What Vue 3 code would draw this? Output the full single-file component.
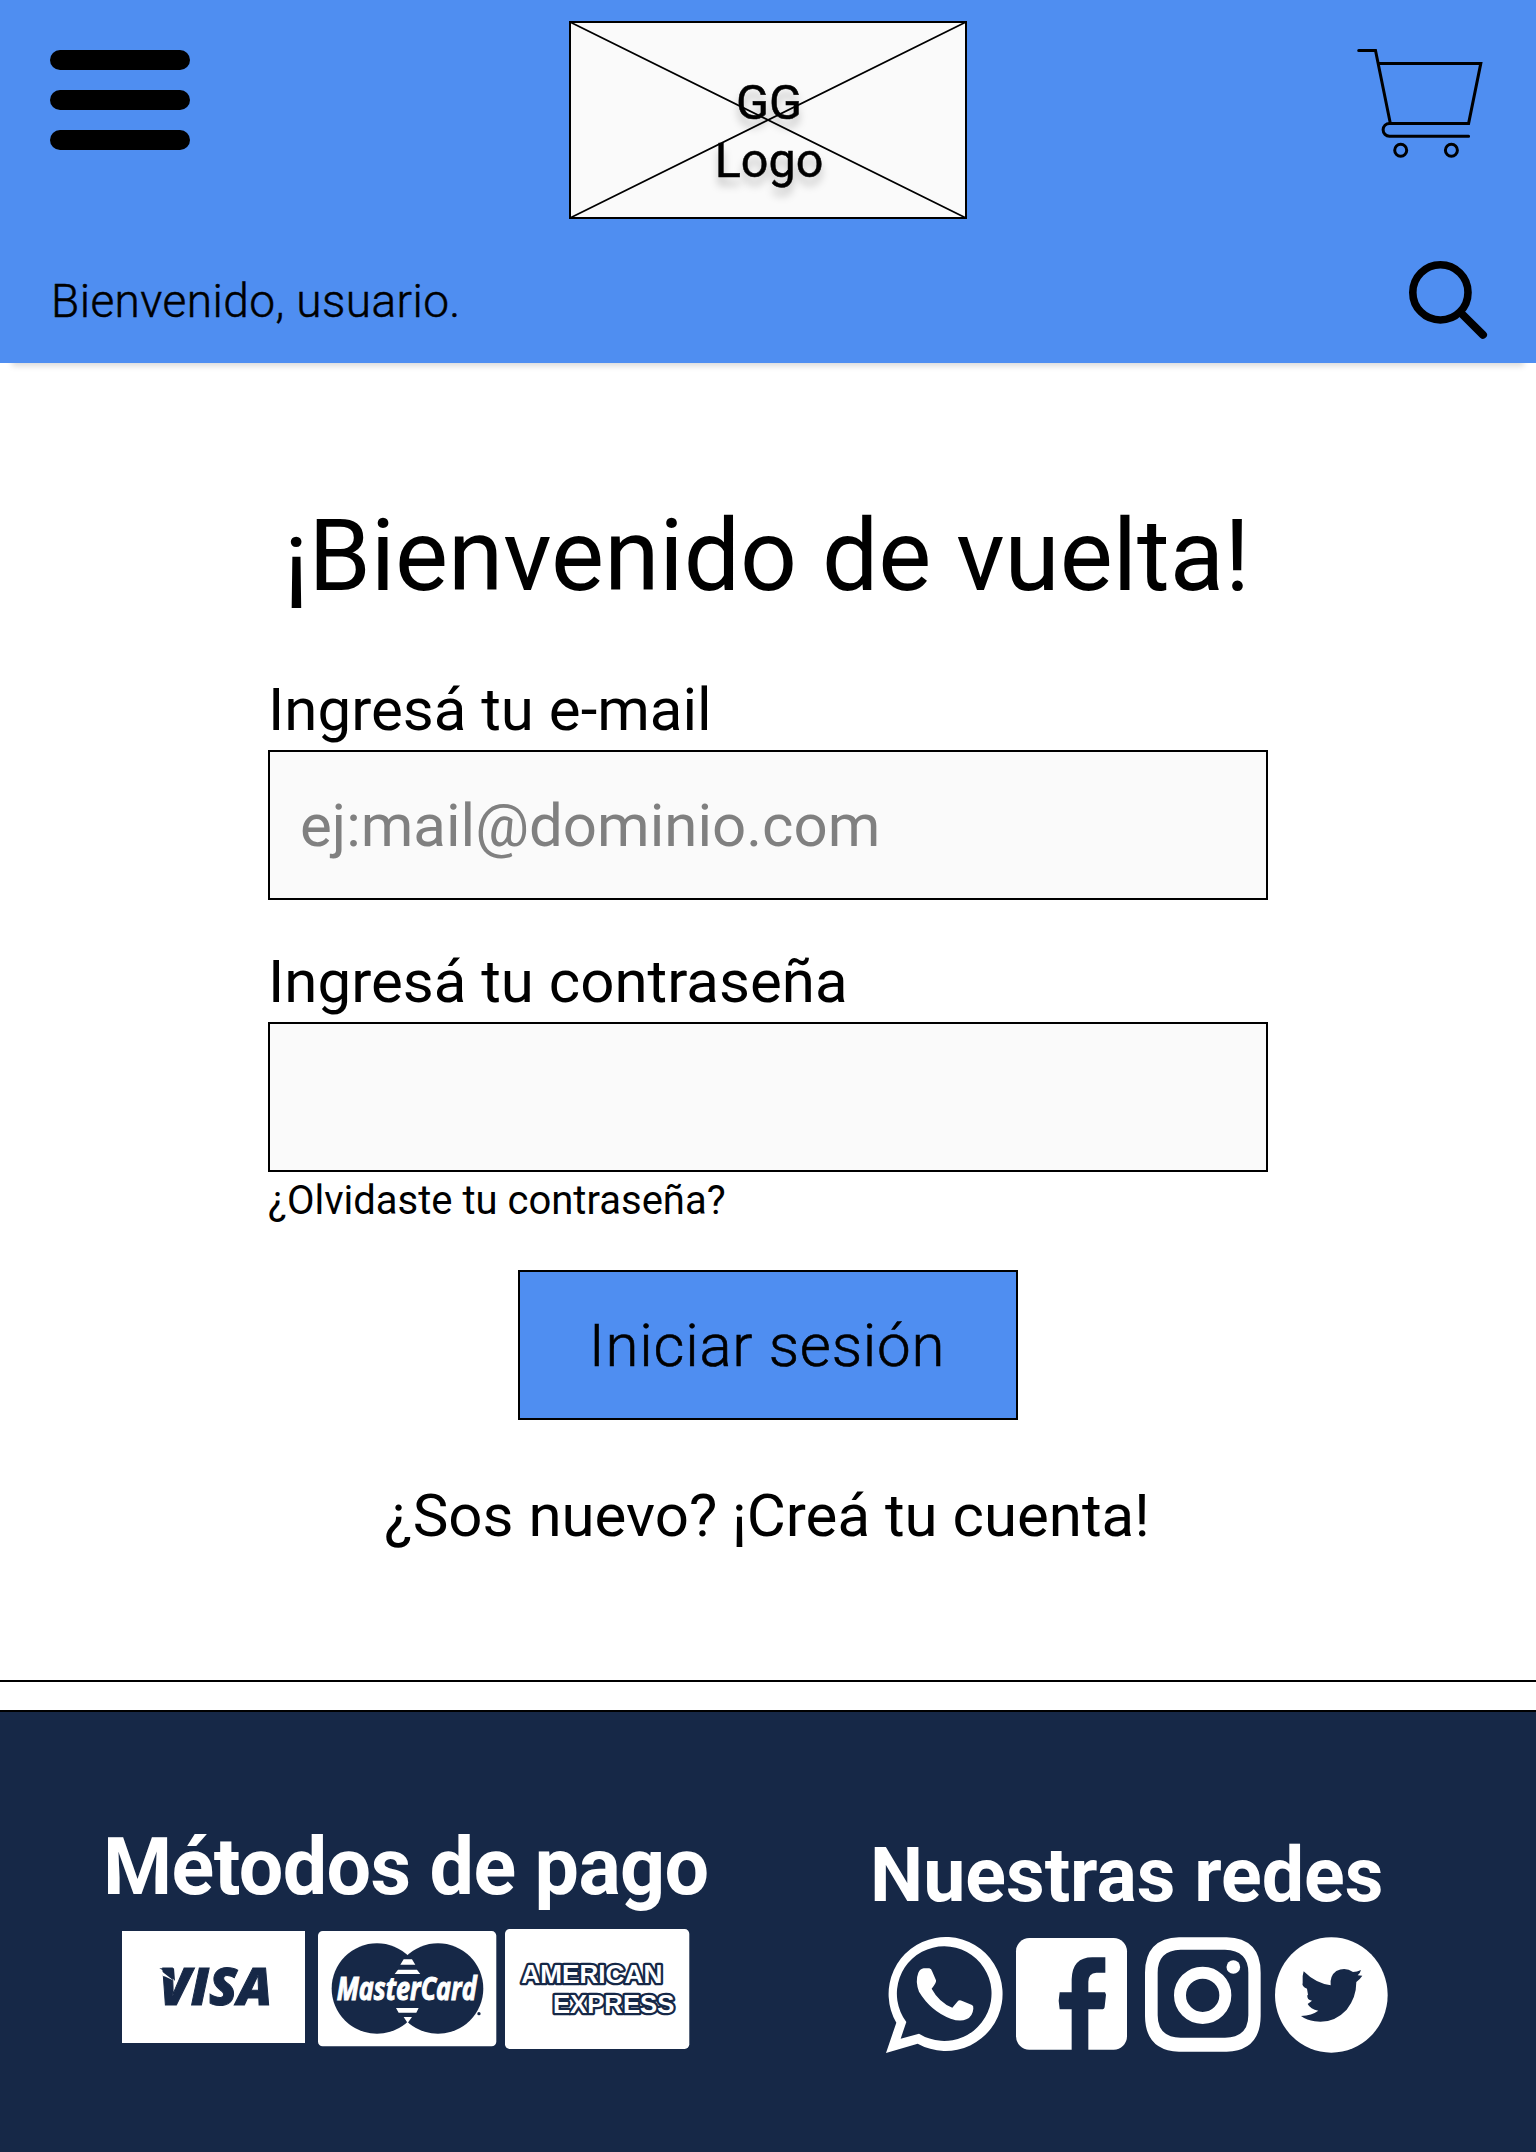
<script setup>
import { ref } from 'vue'

const email = ref('')
const password = ref('')
</script>

<template>
  <div class="page">
    <header class="header">
      <div class="top-row">
        <button class="icon-button menu" type="button" aria-label="Menú">
          <svg width="140" height="100" viewBox="0 0 140 100">
            <rect width="140" height="20" rx="10" />
            <rect y="40" width="140" height="20" rx="10" />
            <rect y="80" width="140" height="20" rx="10" />
          </svg>
        </button>
        <div class="logo">
          <svg class="logo-cross" viewBox="0 0 398 198" preserveAspectRatio="none">
            <path d="M1 1 397 197M397 1 1 197" fill="none" stroke="#000" stroke-width="1.8" />
          </svg>
          <span class="logo-text">GG<br />Logo</span>
        </div>
        <button class="icon-button cart" type="button" aria-label="Carrito">
          <svg width="126" height="110" viewBox="1357 49 126 110" fill="none" stroke="#000" stroke-width="3" stroke-linecap="round" stroke-linejoin="miter">
            <path d="M1358.7 50.5H1375.5L1390.3 123.3" />
            <path d="M1379 63.4H1480.8L1468.6 123.4H1389.5A6.4 6.4 0 0 0 1389.5 136.2H1468.6" />
            <circle cx="1400.7" cy="150.3" r="6" />
            <circle cx="1451.4" cy="150.3" r="6" />
          </svg>
        </button>
      </div>
      <div class="bottom-row">
        <span class="greeting">Bienvenido, usuario.</span>
        <button class="icon-button search" type="button" aria-label="Buscar">
          <svg width="80" height="80" viewBox="0 0 80 80" fill="none" stroke="#000">
            <circle cx="32.4" cy="32.4" r="27.6" stroke-width="7.6" />
            <path d="M53 53 75 74.8" stroke-width="8" stroke-linecap="round" />
          </svg>
        </button>
      </div>
    </header>

    <main class="login">
      <h1>¡Bienvenido de vuelta!</h1>
      <form class="form" @submit.prevent>
        <label for="email">Ingresá tu e-mail</label>
        <input id="email" v-model="email" type="text" placeholder="ej:mail@dominio.com" />
        <label for="password">Ingresá tu contraseña</label>
        <input id="password" v-model="password" type="password" />
        <a class="forgot">¿Olvidaste tu contraseña?</a>
        <button class="submit" type="submit">Iniciar sesión</button>
      </form>
      <a class="register">¿Sos nuevo? ¡Creá tu cuenta!</a>
    </main>

    <div class="divider"></div>

    <footer class="footer">
      <section class="payments">
        <h2>Métodos de pago</h2>
        <div class="cards">
          <svg class="visa" width="183" height="112" viewBox="0 0 183 112">
            <rect width="183" height="112" fill="#fff" />
            <text x="37" y="74" textLength="113" lengthAdjust="spacingAndGlyphs" class="visa-text">VISA</text>
            <path d="M37.3 37.3H52L53 50Q47 42 37.3 37.3Z" fill="#162847" />
            <path d="M38 39 51.5 49.5 43 45.5 41 45Z" fill="#fff" />
          </svg>
          <svg class="mastercard" width="178.3" height="116" viewBox="23 33 535 348">
            <rect x="23" y="33" width="535" height="346" rx="14" fill="#fff" />
            <g fill="#162847">
              <circle cx="200" cy="205.5" r="136" />
              <circle cx="383" cy="205.5" r="136" />
              <circle cx="506" cy="281" r="5" />
            </g>
            <path fill="#fff" d="M280 118H305L315 134H270ZM263 149H320L330 162H253ZM257 264H325L318 278H265ZM280 291H305L292 309Z" />
            <text x="79" y="239" textLength="420" lengthAdjust="spacingAndGlyphs" class="mc-text">MasterCard</text>
          </svg>
          <svg class="amex" width="184.3" height="120" viewBox="586 27 553 360">
            <rect x="586" y="27" width="553" height="360" rx="14" fill="#fff" />
            <text x="635" y="189" textLength="423" lengthAdjust="spacingAndGlyphs" class="amex-text">AMERICAN</text>
            <text x="730" y="279" textLength="364" lengthAdjust="spacingAndGlyphs" class="amex-text">EXPRESS</text>
          </svg>
        </div>
      </section>
      <section class="social">
        <h2>Nuestras redes</h2>
        <div class="networks">
          <svg width="130" height="117" viewBox="31 33 390 351" fill="#fff">
            <path fill-rule="evenodd" d="M62 290A171 171 0 1 1 126 353L31 381ZM92 288 75 338 130 323A142 142 0 1 0 92 288Z" />
            <path d="M144 127H161Q167 128 170 137L181 163Q183 170 168 188Q190 229 230 245L245 227Q250 221 258 224L289 237Q294 239 293 248Q291 272 272 280Q253 288 225 278Q165 255 130 197Q118 165 128 140Q134 128 144 127Z" />
          </svg>
          <svg width="129" height="117" viewBox="421 33 387 351">
            <rect x="421" y="36" width="333" height="335" rx="40" fill="#fff" />
            <path fill="#162847" d="M588 372V250H552L549 224 552 199H588V160Q590 94 650 94H689V140H662Q638 142 638 167V199H688L691 206 687 242Q686 250 678 250H638V372Z" />
          </svg>
          <svg width="129.33" height="117" viewBox="28 33 388 351">
            <path fill="#fff" fill-rule="evenodd" d="M130 34H273Q375 37 375 140V270Q374 374 273 377H130Q29 374 28 270V140Q29 37 130 34ZM135 71Q66 73 66 140V268Q66 334 135 335H268Q338 334 338 268V140Q338 73 268 71Z" />
            <circle cx="201" cy="208" r="68" fill="none" stroke="#fff" stroke-width="36" />
            <circle cx="293" cy="123" r="20.5" fill="#fff" />
          </svg>
          <svg width="112.67" height="117" viewBox="416 33 338 351">
            <ellipse cx="585" cy="207" rx="169" ry="173" fill="#fff" />
            <path fill="#162847" d="M502 136Q538 172 583 178Q580 149 600 135Q627 121 650 138Q662 138 674 132Q672 141 664 148L678 149Q671 160 660 168Q660 215 631 251Q591 294 535 286Q512 283 494 270Q527 268 546 254Q522 250 514 234L527 224Q511 222 513 208L515 206 512 188Q495 180 499 170Q497 150 502 136Z" />
          </svg>
        </div>
      </section>
    </footer>
  </div>
</template>

<style>
body {
  margin: 0;
  background: #fff;
}
</style>

<style scoped>
.page {
  width: 1536px;
  height: 2152px;
  display: flex;
  flex-direction: column;
  overflow: hidden;
  font-family: Roboto, sans-serif;
  color: #000;
}

.page * {
  box-sizing: border-box;
}

svg {
  display: block;
  overflow: visible;
}

.icon-button {
  padding: 0;
  border: 0;
  background: none;
}

.header {
  height: 363px;
  flex: none;
  background: #4f8ef1;
  box-shadow: 0 15px 6px -12px rgba(0, 0, 0, 0.15);
}

.top-row {
  display: grid;
  grid-template-columns: 1fr 398px 1fr;
  align-items: start;
  height: 219px;
  padding: 21px 50px 0;
}

.menu {
  justify-self: start;
  margin-top: 29px;
}

.cart {
  justify-self: end;
  margin: 28px 3px 0 0;
}

.logo {
  position: relative;
  height: 198px;
  border: 2px solid #000;
  background: #fafafa;
  text-align: center;
}

.logo-cross {
  position: absolute;
  inset: -2px;
  width: 398px;
  height: 198px;
}

.logo-text {
  display: block;
  margin-top: 51px;
  padding-left: 2px;
  font-size: 48.5px;
  line-height: 57.5px;
  -webkit-text-stroke: 0.5px #000;
  text-shadow: 0 8px 8px rgba(0, 0, 0, 0.25);
}

.bottom-row {
  display: flex;
  justify-content: space-between;
  align-items: flex-start;
  padding: 41px 48px 0 50px;
}

.greeting {
  margin-top: 14px;
  padding-left: 1px;
  font-size: 46px;
  font-weight: 300;
  line-height: 54px;
  letter-spacing: 0.42px;
  -webkit-text-stroke: 0.5px #000;
}

.login {
  display: flex;
  flex-direction: column;
  align-items: center;
  height: 1317px;
  padding-top: 133px;
}

h1 {
  margin: 0 0 59px;
  padding-right: 2px;
  font-size: 100px;
  font-weight: 400;
  line-height: 120px;
  white-space: nowrap;
}

.form {
  display: flex;
  flex-direction: column;
  width: 1000px;
}

label {
  margin-bottom: 5px;
  font-size: 60px;
  line-height: 70px;
}

input {
  width: 100%;
  height: 150px;
  padding: 0 30px;
  border: 2px solid #000;
  border-radius: 0;
  outline: 0;
  background: #fafafa;
  font: 400 60px Roboto, sans-serif;
}

input::placeholder {
  color: #808080;
  opacity: 1;
}

#email {
  margin-bottom: 47px;
}

.forgot {
  margin-top: 6px;
  font-size: 40px;
  line-height: 46px;
}

.submit {
  align-self: center;
  width: 500px;
  height: 150px;
  margin: 46px 0 61px;
  padding: 0 2px 0 0;
  border: 2px solid #000;
  background: #4f8ef1;
  color: #000;
  font: 300 60px Roboto, sans-serif;
  letter-spacing: 0.75px;
  -webkit-text-stroke: 0.6px #000;
}

.register {
  padding-right: 2px;
  font-size: 60px;
  line-height: 70px;
}

.divider {
  flex: none;
  height: 32px;
  border: solid #000;
  border-width: 2px 0;
}

.footer {
  display: grid;
  grid-template-columns: 768px 1fr;
  flex: 1;
  padding-left: 102px;
  background: #162847;
}

h2 {
  margin: 0;
  color: #fff;
  font-weight: 700;
  line-height: 90px;
  white-space: nowrap;
}

.payments h2 {
  margin: 110px 0 17px;
  padding-left: 1px;
  font-size: 79px;
  letter-spacing: -0.6px;
}

.cards {
  display: flex;
  align-items: flex-start;
  padding-left: 20px;
}

.visa {
  margin: 2px 12.7px 0 0;
}

.mastercard {
  margin: 2px 9.3px 0 0;
}

.visa-text {
  fill: #162847;
  stroke: #162847;
  stroke-width: 1px;
  font: italic 800 51px 'Open Sans', 'Noto Sans', sans-serif;
}

.mc-text {
  fill: #fff;
  stroke: #fff;
  stroke-width: 3px;
  font: italic 700 94px 'Open Sans', 'Noto Sans', sans-serif;
}

.amex-text {
  fill: #fff;
  stroke: #162847;
  stroke-width: 14px;
  stroke-linejoin: round;
  paint-order: stroke;
  font: 700 77px 'Liberation Sans', Arial, sans-serif;
}

.social h2 {
  margin: 118px 0 17px;
  font-size: 75.3px;
}

.networks {
  display: flex;
  padding-left: 16.3px;
}
</style>
